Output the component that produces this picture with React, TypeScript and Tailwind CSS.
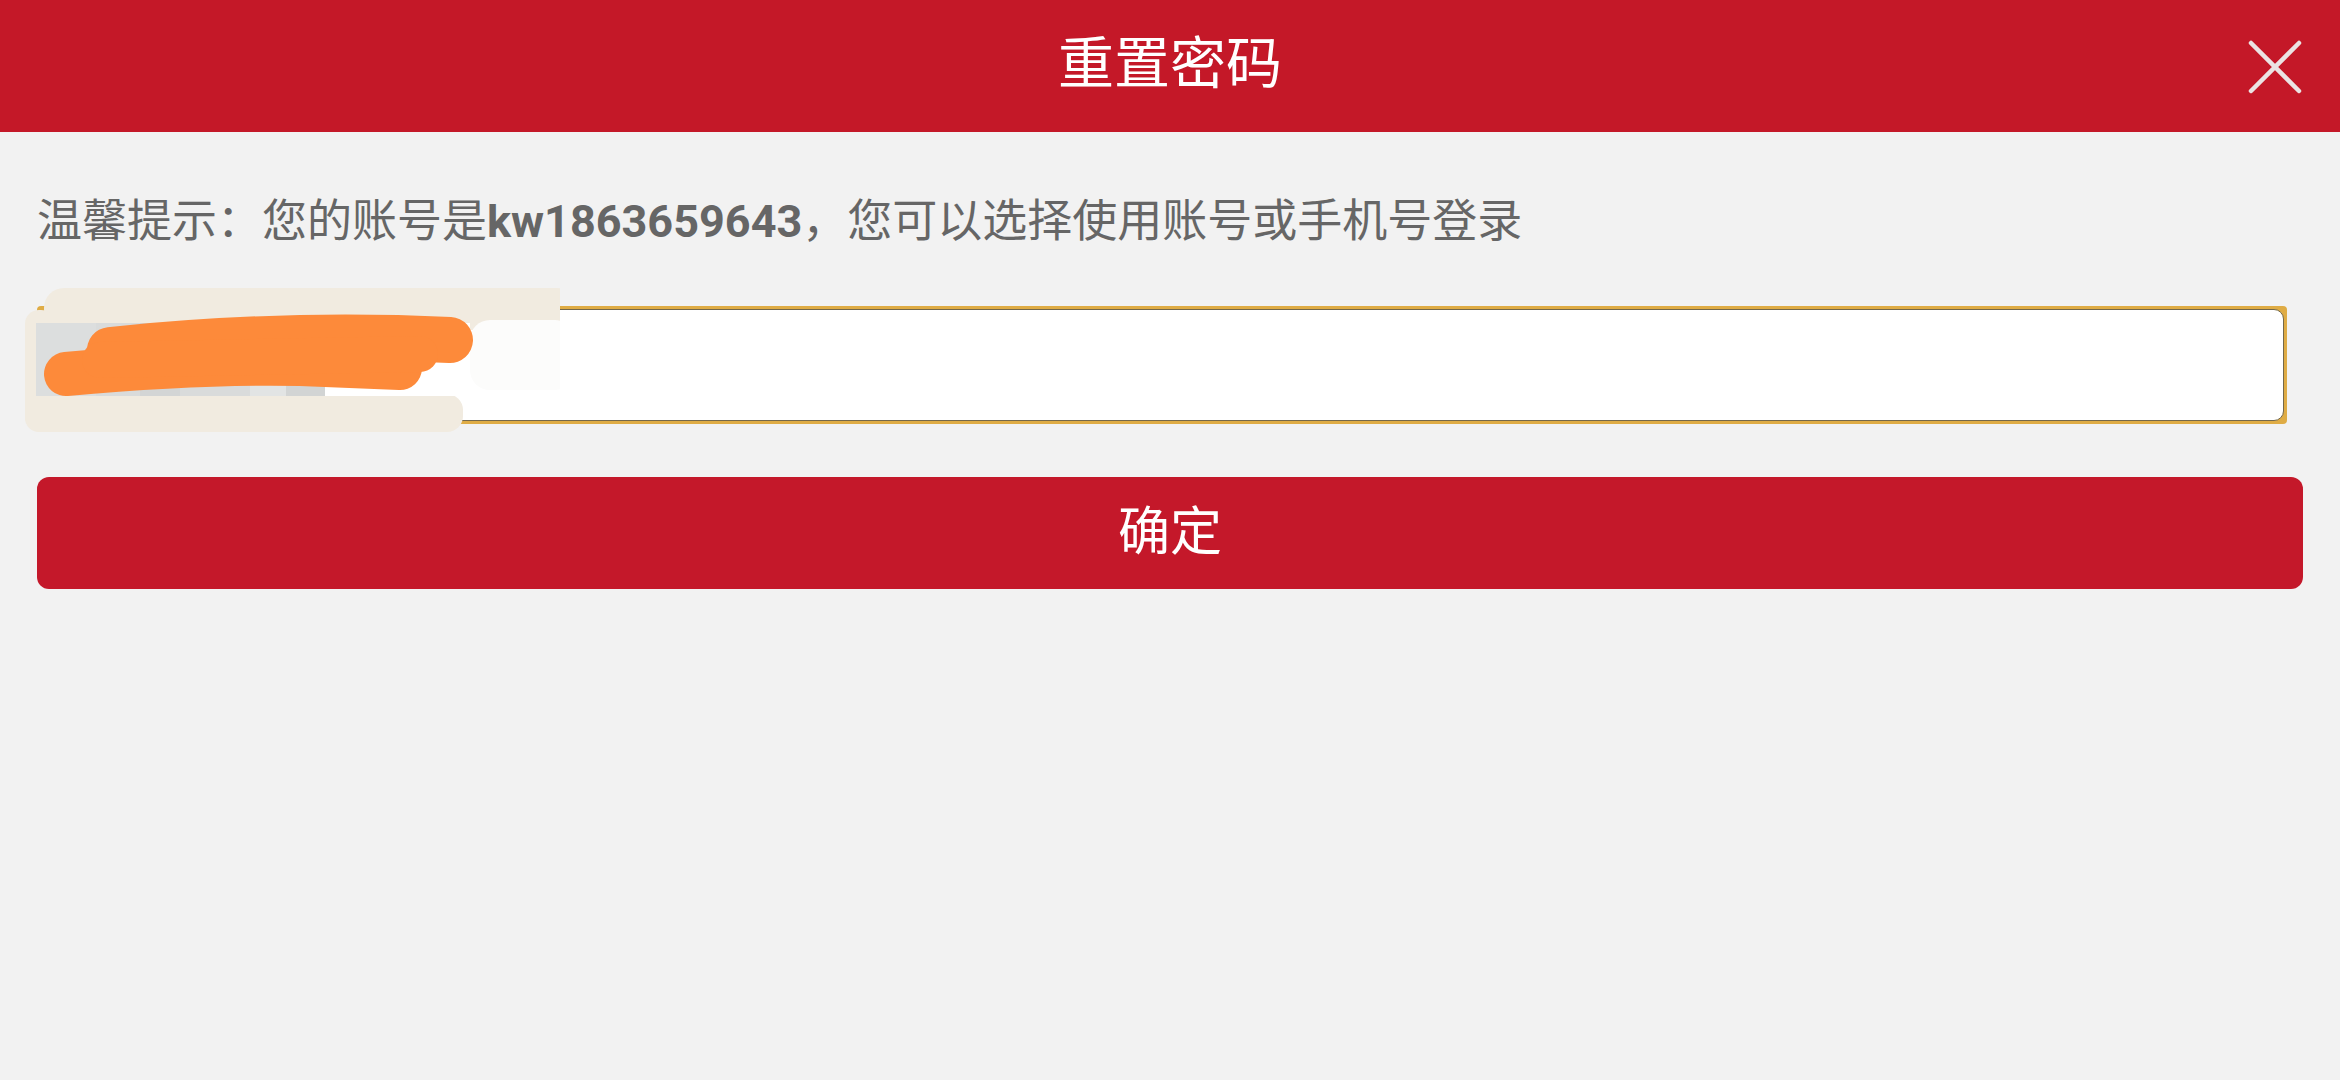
import React from "react";

export default function App() {
  const font = { fontFamily: "Roboto, 'Noto Sans CJK SC', sans-serif" };
  return (
    <div className="w-[2340px] h-[1080px] bg-[#f2f2f2] flex flex-col" style={font}>
      <header className="relative h-[132px] bg-[#c41828] flex items-center justify-center">
        <h1 className="text-[56px] leading-none text-white font-normal -mt-[4px]">重置密码</h1>
        <button className="absolute right-[38px] top-[40px] w-[54px] h-[54px] flex items-center justify-center">
          <svg width="54" height="54" viewBox="0 0 54 54">
            <path d="M3 3 L51 51 M51 3 L3 51" stroke="#ebe3e3" strokeWidth="4.5" strokeLinecap="round" />
          </svg>
        </button>
      </header>

      <div className="flex flex-col px-[37px]">
        <p className="mt-[60px] h-[60px] leading-[60px] text-[45px] text-[#666666] whitespace-nowrap">
          温馨提示：您的账号是<span className="font-bold">kw1863659643</span>，您可以选择使用账号或手机号登录
        </p>

        <div className="relative mt-[54px] mr-[16px]">
          <div className="h-[118px] bg-[#dfac45] p-[3px] rounded-[4px]">
            <div className="h-full bg-white rounded-[10px] border-[1.5px] border-[#74684a]" />
          </div>
          <svg
            className="absolute left-[-37px] top-[-36px]"
            width="560"
            height="180"
            viewBox="0 0 560 180"
          >
            {/* beige patches */}
            <rect x="44" y="18" width="533" height="42" rx="20" fill="#f1ebe0" />
            <rect x="25" y="40" width="30" height="122" rx="14" fill="#f1ebe0" />
            <rect x="25" y="124" width="438" height="38" rx="16" fill="#f1ebe0" />
            <rect x="470" y="50" width="105" height="70" rx="20" fill="#fcfcfb" />
            {/* gray mosaic */}
            <rect x="36" y="53" width="289" height="73" fill="#d9dbdb" />
            <rect x="36" y="53" width="60" height="73" fill="#dcdede" />
            <rect x="140" y="53" width="40" height="73" fill="#d3d5d5" />
            <rect x="250" y="53" width="36" height="73" fill="#e2e4e4" />
            <rect x="286" y="53" width="39" height="73" fill="#d2d4d4" />
            <rect x="325" y="53" width="145" height="73" fill="#ffffff" />
            {/* orange scribble */}
            <path d="M110 80 Q 280 62 450 70" stroke="#fd8a3a" strokeWidth="46" strokeLinecap="round" fill="none" />
            <path d="M66 104 Q 200 92 300 94 L 400 98" stroke="#fd8a3a" strokeWidth="44" strokeLinecap="round" fill="none" />
            <path d="M100 90 L 420 84" stroke="#fd8a3a" strokeWidth="36" strokeLinecap="round" fill="none" />
          </svg>
        </div>

        <button className="mt-[53px] h-[112px] rounded-[12px] bg-[#c4182a] text-white text-[52px] leading-none flex items-center justify-center">
          确定
        </button>
      </div>
    </div>
  );
}
